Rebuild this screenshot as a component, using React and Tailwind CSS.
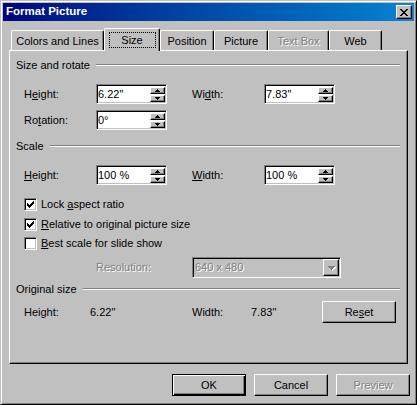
import React from "react";

const raised =
  "bg-[#c0c0c0] border border-t-white border-l-white border-r-black border-b-black shadow-[inset_-1px_-1px_0_#808080]";
const sunken =
  "border border-t-[#808080] border-l-[#808080] border-r-white border-b-white shadow-[inset_1px_1px_0_#000,inset_-1px_-1px_0_#c0c0c0]";
const disabledText = "text-[#808080] [text-shadow:1px_1px_0_#fff]";

function Arrow({ up, color = "#000" }) {
  return (
    <svg width="7" height="4" viewBox="0 0 7 4" shapeRendering="crispEdges">
      {up ? (
        <path d="M3 0h1v1h1v1h1v1h1v1H0V3h1V2h1V1h1z" fill={color} />
      ) : (
        <path d="M0 0h7v1H6v1H5v1H4v1H3V3H2V2H1V1H0z" fill={color} />
      )}
    </svg>
  );
}

// small spinner triangle, 5x3
function SpinArrow({ up }) {
  return (
    <svg width="5" height="3" viewBox="0 0 5 3" shapeRendering="crispEdges">
      {up ? (
        <path d="M2 0h1v1h1v1h1v1H0V2h1V1h1z" fill="#000" />
      ) : (
        <path d="M0 0h5v1H4v1H3v1H2V2H1V1H0z" fill="#000" />
      )}
    </svg>
  );
}

function SpinField({ value }) {
  return (
    <div className={`w-[71px] h-[20px] bg-white flex items-center ${sunken}`}>
      <span className="flex-1 pl-[1px] leading-none">{value}</span>
      <div className="flex flex-col gap-[1px] mr-[1px]">
        <div className={`w-[15px] h-[7px] flex items-center justify-center ${raised}`}>
          <SpinArrow up />
        </div>
        <div className={`w-[15px] h-[7px] flex items-center justify-center ${raised}`}>
          <SpinArrow />
        </div>
      </div>
    </div>
  );
}

function GroupTitle({ label, className }) {
  return (
    <div className={`flex items-center h-[14px] pl-[6px] pr-[7px] ${className}`}>
      <span className="whitespace-nowrap">{label}</span>
      <div className="flex-1 ml-[6px] h-[2px] border-t border-t-[#808080] border-b border-b-white" />
    </div>
  );
}

function Check({ checked, children, className }) {
  return (
    <div className={`flex items-center h-[13px] pl-[14px] ${className}`}>
      <div className={`w-[13px] h-[13px] bg-white flex items-center justify-center ${sunken}`}>
        {checked && (
          <svg width="7" height="7" viewBox="0 0 7 7" shapeRendering="crispEdges">
            <path
              d="M6 0h1v3H6v1H5v1H4v1H3v1H2V6H1V5H0V2h1v1h1v1h1V3h1V2h1V1h1z"
              fill="#000"
            />
          </svg>
        )}
      </div>
      <span className="ml-[4px] whitespace-nowrap">{children}</span>
    </div>
  );
}

function Tab({ label, width, disabled }) {
  return (
    <div
      className={`h-[20px] ${width} flex items-center justify-center pt-[1px] bg-[#c0c0c0] border-t border-l border-t-white border-l-white border-r border-r-black rounded-t-[2px] shadow-[inset_-1px_0_0_#808080] whitespace-nowrap ${
        disabled ? disabledText : ""
      }`}
    >
      {label}
    </div>
  );
}

export default function App() {
  return (
    <div className="w-[417px] h-[405px] bg-[#c0c0c0] border border-t-[#c0c0c0] border-l-[#c0c0c0] border-r-black border-b-black shadow-[inset_1px_1px_0_#fff,inset_-1px_-1px_0_#808080] p-[2px] flex flex-col font-['Liberation_Sans',Arial,sans-serif] text-[11px] text-black select-none">
      {/* title bar */}
      <div className="h-[18px] flex items-center bg-gradient-to-r from-[#000080] to-[#1084d0]">
        <span className="pl-[3px] flex-1 text-white font-bold text-[11.5px]">Format Picture</span>
        <div className={`w-[16px] h-[14px] mr-[2px] flex items-center justify-center ${raised}`}>
          <svg width="8" height="7" viewBox="0 0 8 7" shapeRendering="crispEdges">
            <path
              d="M0 0h2v1h1v1h2V1h1V0h2v1H7v1H6v1H5v1h1v1h1v1h1v1H6V6H5V5H3v1H2v1H0V6h1V5h1V4h1V3H2V2H1V1H0z"
              fill="#000"
            />
          </svg>
        </div>
      </div>

      {/* tabs */}
      <div className="mt-[7px] h-[22px] flex items-end pl-[8px]">
        <Tab label="Colors and Lines" width="w-[93px]" />
        <div className="relative z-10 w-[56px] h-[23px] -mb-[1px] flex justify-center pt-[3px] bg-[#c0c0c0] border-t border-l border-t-white border-l-white border-r border-r-black rounded-t-[2px] shadow-[inset_-1px_0_0_#808080]">
          <div className="w-[47px] h-[16px] border border-dotted border-black flex items-center justify-center">
            Size
          </div>
        </div>
        <Tab label="Position" width="w-[54px]" />
        <Tab label="Picture" width="w-[54px]" />
        <Tab label="Text Box" width="w-[61px]" disabled />
        <Tab label="Web" width="w-[53px]" />
      </div>

      {/* panel */}
      <div className="ml-[6px] w-[399px] h-[314px] flex flex-col border border-t-white border-l-white border-r-black border-b-black shadow-[inset_-1px_-1px_0_#808080]">
        <GroupTitle label="Size and rotate" className="mt-[7px]" />

        <div className="mt-[12px] h-[20px] flex items-center pl-[14px]">
          <span className="w-[72px]">
            H<span className="underline">e</span>ight:
          </span>
          <SpinField value={'6.22"'} />
          <span className="w-[25px]" />
          <span className="w-[72px]">
            Wi<span className="underline">d</span>th:
          </span>
          <SpinField value={'7.83"'} />
        </div>

        <div className="mt-[6px] h-[20px] flex items-center pl-[14px]">
          <span className="w-[72px]">
            Ro<span className="underline">t</span>ation:
          </span>
          <SpinField value="0°" />
        </div>

        <GroupTitle label="Scale" className="mt-[9px]" />

        <div className="mt-[12px] h-[20px] flex items-center pl-[14px]">
          <span className="w-[72px]">
            <span className="underline">H</span>eight:
          </span>
          <SpinField value="100 %" />
          <span className="w-[25px]" />
          <span className="w-[72px]">
            <span className="underline">W</span>idth:
          </span>
          <SpinField value="100 %" />
        </div>

        <Check checked className="mt-[13px]">
          Lock <span className="underline">a</span>spect ratio
        </Check>
        <Check checked className="mt-[7px]">
          <span className="underline">R</span>elative to original picture size
        </Check>
        <Check className="mt-[6px]">
          <span className="underline">B</span>est scale for slide show
        </Check>

        <div className="mt-[7px] h-[21px] flex items-center pl-[86px]">
          <span className={`w-[96px] ${disabledText}`}>Resolution:</span>
          <div className={`w-[149px] h-[21px] flex items-center bg-[#c0c0c0] ${sunken}`}>
            <span className={`flex-1 pl-[2px] ${disabledText}`}>640 x 480</span>
            <div className={`w-[16px] h-[17px] mr-[1px] flex items-center justify-center ${raised}`}>
              <div className="relative">
                <div className="absolute left-[1px] top-[1px]">
                  <Arrow color="#fff" />
                </div>
                <div className="relative">
                  <Arrow color="#808080" />
                </div>
              </div>
            </div>
          </div>
        </div>

        <GroupTitle label="Original size" className="mt-[4px]" />

        <div className="mt-[5px] h-[22px] flex items-center pl-[14px]">
          <span className="w-[66px]">Height:</span>
          <span className="w-[102px]">6.22"</span>
          <span className="w-[59px]">Width:</span>
          <span className="w-[71px]">7.83"</span>
          <button className={`w-[74px] h-[22px] flex items-center justify-center ${raised}`}>
            Re<span className="underline">s</span>et
          </button>
        </div>
      </div>

      {/* dialog buttons */}
      <div className="mt-[10px] flex justify-end gap-[8px] pr-[4px]">
        <button className="w-[74px] h-[22px] flex items-center justify-center bg-[#c0c0c0] border border-black shadow-[inset_1px_1px_0_#fff,inset_-1px_-1px_0_#000,inset_-2px_-2px_0_#808080]">
          OK
        </button>
        <button className={`w-[74px] h-[22px] flex items-center justify-center ${raised}`}>
          Cancel
        </button>
        <button className={`w-[74px] h-[22px] flex items-center justify-center ${raised} ${disabledText}`}>
          Preview
        </button>
      </div>
    </div>
  );
}
